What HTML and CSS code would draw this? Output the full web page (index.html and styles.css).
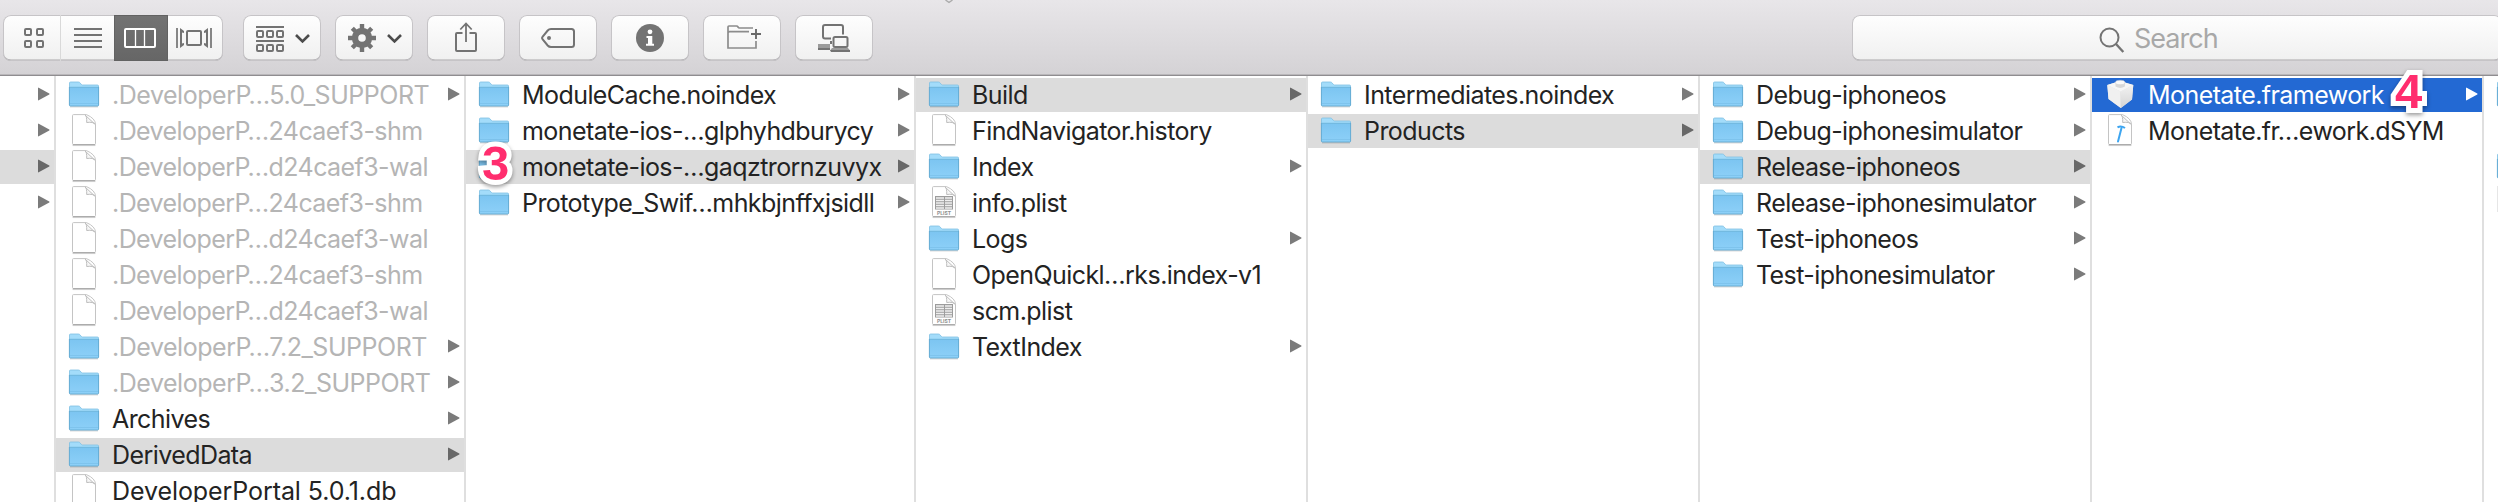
FILE: index.html
```
<!DOCTYPE html>
<html lang="en">
<head>
<meta charset="utf-8">
<title>DerivedData</title>
<link rel="stylesheet" href="styles.css">
</head>
<body>
<svg class="defs" aria-hidden="true">
  <defs>
    <linearGradient id="gFolder" x1="0" y1="0" x2="0" y2="1"><stop offset="0" stop-color="#7cc5f1"/><stop offset="1" stop-color="#8dd0f8"/></linearGradient>
    <linearGradient id="gCube" x1="0" y1="0" x2="0" y2="1"><stop offset="0" stop-color="#f2f2f2"/><stop offset="1" stop-color="#d4d4d4"/></linearGradient>
    <symbol id="folder" viewBox="0 0 32 34">
      <path d="M2 28.8h28" stroke="#000" stroke-opacity=".18" stroke-width="1.2"/>
      <path d="M1.500 27V5q0-1 1-1h8q.8 0 1.400.7l1.600 1.900q.4.400 1 .4H29.500q1 0 1 1v19z" fill="#a3dcfa" stroke="#7dbfe2" stroke-width=".8"/>
      <path d="M1.400 9.500H30.600V27q0 1-1 1H2.400q-1 0-1-1z" fill="url(#gFolder)"/>
      <path d="M1.400 9.300H30.600" stroke="#6cb4dd" stroke-width="1"/>
      <path d="M2 25.500H30" stroke="#79bfe8" stroke-width=".7"/>
      <path d="M1.400 9v18q0 1 1 1H29.600q1 0 1-1V9" fill="none" stroke="#62a9d0" stroke-width=".9"/>
    </symbol>
    <symbol id="doc" viewBox="0 0 32 34">
      <path d="M4.500 31.500h23" stroke="#000" stroke-opacity=".15" stroke-width="1.200"/>
      <path d="M5.500.6H18.500Q27.500 4.500 27.500 10.500V29.600q0 1-1 1H5.500q-1 0-1-1V1.600q0-1 1-1z" fill="#fff" stroke="#c4c4c4" stroke-width="1"/>
      <path d="M5 30.700h22" stroke="#a6a6a6" stroke-width="1"/>
      <path d="M17 1Q19 2 18.700 8.500Q25.500 7.500 27.300 10.500Z" fill="#f7f7f7" stroke="#bdbdbd" stroke-width="1" stroke-linejoin="round"/>
    </symbol>
    <symbol id="plist" viewBox="0 0 32 34">
      <use href="#doc"/>
      <rect x="7" y="10" width="18" height="13.500" fill="#9c9c9c"/>
      <path d="M8 12h8M8 14.500h8M8 17h8M8 19.500h8M8 22h8M17 12H24M17 14.500H24M17 17H24M17 19.500H24M17 22H24" stroke="#efefef" stroke-width="1.500"/>
      <text x="16" y="28.900" text-anchor="middle" class="plist-tag">PLIST</text>
    </symbol>
    <symbol id="dsym" viewBox="0 0 32 34">
      <use href="#doc"/>
      <path d="M17.500 14L14 27.500" stroke="#3da5f0" stroke-width="2" stroke-linecap="round"/>
      <path d="M13.500 13.300Q17 11.200 21 14" fill="none" stroke="#3da5f0" stroke-width="2"/>
    </symbol>
    <symbol id="cube" viewBox="0 0 32 34">
      <path d="M3.300 7L16 3l13.300 4L28 21.500 16.800 30 4.500 21z" fill="#dcdcdc"/>
      <path d="M3.300 7L16.500 13.500 16.800 30 4.500 21z" fill="#f0f0f0"/>
      <path d="M29.300 7L16.500 13.500 16.800 30 28 21.500z" fill="url(#gCube)"/>
      <path d="M3.300 7L16 3l13.300 4L16.500 13.500z" fill="#f6f6f6"/>
      <path d="M11.500 4.500v4q4.700 2.800 9.400 0v-4z" fill="#d8d8d8"/>
      <ellipse cx="16.200" cy="4.500" rx="4.700" ry="2.200" fill="#fafafa" stroke="#ccc" stroke-width=".5"/>
    </symbol>
    <symbol id="tri" viewBox="0 0 12 14"><path d="M.7.700L11.300 6.600q.4.400 0 .8L.7 13.300q-.7.300-.7-.4V1.100Q0 .4.700.700z" fill="currentColor"/></symbol>
    <symbol id="chev" viewBox="0 0 16 10"><path d="M1.500 1.500L8 8l6.500-6.500" fill="none" stroke="#4c4c4c" stroke-width="2.600"/></symbol>
  </defs>
</svg>

<header class="toolbar">
  <svg class="title-mark" width="8" height="4" viewBox="0 0 8 4"><path d="M.5 0L4 2.500 7.500 0" fill="none" stroke="#aaa" stroke-width="1.400"/></svg>
  <div class="segmented">
    <button class="seg seg-icon" aria-label="Icon view"><svg width="58" height="46" viewBox="3 15 58 46"><g class="line"><rect x="25" y="29" width="6" height="6" rx="1"/><rect x="37" y="29" width="6" height="6" rx="1"/><rect x="25" y="41" width="6" height="6" rx="1"/><rect x="37" y="41" width="6" height="6" rx="1"/></g></svg></button>
    <button class="seg seg-list" aria-label="List view"><svg width="53" height="46" viewBox="61 15 53 46"><path class="line" d="M74 29h28M74 35h28M74 41h28M74 47h28"/></svg></button>
    <button class="seg seg-cols" aria-label="Column view"><svg width="54" height="46" viewBox="114 15 54 46"><rect x="125" y="29" width="30" height="18" rx="1" fill="none" stroke="#fff" stroke-width="2"/><path d="M135.500 30v16M144.500 30v16" stroke="#fff" stroke-width="1.300"/></svg></button>
    <button class="seg seg-flow" aria-label="Cover flow view"><svg width="55" height="46" viewBox="168 15 55 46"><rect class="line" x="187" y="31" width="14" height="14" rx="1"/><path class="line thin" d="M177 28v20M211 28v20"/><path d="M180 28l4 3v2l-2-.5v11l2-.5v2l-4 3zM208 28l-4 3v2l2-.5v11l-2-.5v2l4 3z" fill="#737373"/></svg></button>
  </div>
  <button class="btn" aria-label="Arrange"><svg width="78" height="46" viewBox="243 15 78 46"><g class="line"><path d="M256 27h28M256 41h28"/><rect x="257" y="31" width="6" height="6" rx="1"/><rect x="267" y="31" width="6" height="6" rx="1"/><rect x="277" y="31" width="6" height="6" rx="1"/><rect x="257" y="45" width="6" height="6" rx="1"/><rect x="267" y="45" width="6" height="6" rx="1"/><rect x="277" y="45" width="6" height="6" rx="1"/></g><use href="#chev" x="294.500" y="33.500" width="16" height="10"/></svg></button>
  <button class="btn" aria-label="Action"><svg width="78" height="46" viewBox="335 15 78 46"><g fill="none" stroke="#737373"><circle cx="362" cy="38" r="7" stroke-width="6.400"/><g stroke-width="4.400"><path d="M362 24v6M362 46v6M348 38h6M370 38h6"/><path d="M352.300 28.300l4 4M367.700 43.700l4 4M371.700 28.300l-4 4M356.300 43.700l-4 4"/></g></g><use href="#chev" x="386.500" y="33.500" width="16" height="10"/></svg></button>
  <button class="btn" aria-label="Share"><svg width="78" height="46" viewBox="427 15 78 46"><g class="line"><path d="M462.500 33H457q-1 0-1 1v16q0 1 1 1h18q1 0 1-1V34q0-1-1-1h-5.500"/><path d="M466 42V23.500M460.300 29.500L466 23.500l5.700 6" stroke-width="1.800"/></g></svg></button>
  <button class="btn" aria-label="Tags"><svg width="78" height="46" viewBox="519 15 78 46"><path class="line" d="M551 29H571.500q2.500 0 2.500 2.500V44.500q0 2.500-2.500 2.500H551q-2 0-3.300-1.500L542.500 39.200q-1-1.200 0-2.400L547.700 30.500Q549 29 551 29z"/><circle cx="549" cy="38" r="2" fill="#737373"/></svg></button>
  <button class="btn" aria-label="Get info"><svg width="78" height="46" viewBox="611 15 78 46"><circle cx="650" cy="38" r="14" fill="#737373"/><circle cx="650" cy="31.800" r="2.400" fill="#fff"/><path d="M646.500 36H652.300V43.800H654V45.800H646V43.800H648V38H646.500z" fill="#fff"/></svg></button>
  <button class="btn" aria-label="New folder"><svg width="78" height="46" viewBox="703 15 78 46"><g fill="none" stroke="#8c8c8c" stroke-width="1.700"><path d="M756 41v7H728V27q0-1 1-1h7.500q1 0 1.500 1t1.500 1H753M728 33q0-1.300 1.500-1.300H749"/></g><path d="M756 29v10M751 34h10" stroke="#6a6a6a" stroke-width="1.900"/></svg></button>
  <button class="btn" aria-label="Connect"><svg width="78" height="46" viewBox="795 15 78 46"><g class="line"><path d="M831 38.500H825q-2 0-2-2V27q0-2 2-2H841q2 0 2 2v7.500"/><rect x="833.500" y="37" width="14" height="10" rx="1.500"/><path d="M831 41v3"/></g><rect x="818" y="44" width="12" height="4" fill="#9b9b9b"/><path d="M818 48h12v2h-12z" fill="#737373"/><path d="M832 48h16l2 2.500h-20z" fill="#9b9b9b"/><path d="M830 50h20v2h-19z" fill="#737373"/></svg></button>
  <div class="search">
    <svg width="26" height="28" viewBox="0 0 26 28"><circle cx="10.500" cy="10.500" r="9" fill="none" stroke="#747474" stroke-width="2"/><path d="M17 17l7.300 8" stroke="#747474" stroke-width="2.400"/></svg>
    <span>Search</span>
  </div>
</header>

<main class="columns">
  <ul class="col c0">
    <li class="row"><svg class="arrow"><use href="#tri"/></svg></li>
    <li class="row"><svg class="arrow"><use href="#tri"/></svg></li>
    <li class="row on"><svg class="arrow"><use href="#tri"/></svg></li>
    <li class="row"><svg class="arrow"><use href="#tri"/></svg></li>
  </ul>
  <ul class="col c1">
    <li class="row dim support"><svg class="ico"><use href="#folder"/></svg><span>.DeveloperP…5.0_SUPPORT</span><svg class="arrow"><use href="#tri"/></svg></li>
    <li class="row dim"><svg class="ico"><use href="#doc"/></svg><span>.DeveloperP…24caef3-shm</span></li>
    <li class="row dim"><svg class="ico"><use href="#doc"/></svg><span>.DeveloperP…d24caef3-wal</span></li>
    <li class="row dim"><svg class="ico"><use href="#doc"/></svg><span>.DeveloperP…24caef3-shm</span></li>
    <li class="row dim"><svg class="ico"><use href="#doc"/></svg><span>.DeveloperP…d24caef3-wal</span></li>
    <li class="row dim"><svg class="ico"><use href="#doc"/></svg><span>.DeveloperP…24caef3-shm</span></li>
    <li class="row dim"><svg class="ico"><use href="#doc"/></svg><span>.DeveloperP…d24caef3-wal</span></li>
    <li class="row dim support"><svg class="ico"><use href="#folder"/></svg><span>.DeveloperP…7.2_SUPPORT</span><svg class="arrow"><use href="#tri"/></svg></li>
    <li class="row dim support"><svg class="ico"><use href="#folder"/></svg><span>.DeveloperP…3.2_SUPPORT</span><svg class="arrow"><use href="#tri"/></svg></li>
    <li class="row"><svg class="ico"><use href="#folder"/></svg><span>Archives</span><svg class="arrow"><use href="#tri"/></svg></li>
    <li class="row on"><svg class="ico"><use href="#folder"/></svg><span>DerivedData</span><svg class="arrow"><use href="#tri"/></svg></li>
    <li class="row portal"><svg class="ico"><use href="#doc"/></svg><span>DeveloperPortal 5.0.1.db</span></li>
  </ul>
  <ul class="col c2">
    <li class="row"><svg class="ico"><use href="#folder"/></svg><span>ModuleCache.noindex</span><svg class="arrow"><use href="#tri"/></svg></li>
    <li class="row"><svg class="ico"><use href="#folder"/></svg><span>monetate-ios-…glphyhdburycy</span><svg class="arrow"><use href="#tri"/></svg></li>
    <li class="row on"><svg class="ico"><use href="#folder"/></svg><span>monetate-ios-…gaqztrornzuvyx</span><svg class="arrow"><use href="#tri"/></svg><b class="badge three">3</b></li>
    <li class="row"><svg class="ico"><use href="#folder"/></svg><span>Prototype_Swif…mhkbjnffxjsidll</span><svg class="arrow"><use href="#tri"/></svg></li>
  </ul>
  <ul class="col c3">
    <li class="row on"><svg class="ico"><use href="#folder"/></svg><span>Build</span><svg class="arrow"><use href="#tri"/></svg></li>
    <li class="row"><svg class="ico"><use href="#doc"/></svg><span>FindNavigator.history</span></li>
    <li class="row"><svg class="ico"><use href="#folder"/></svg><span>Index</span><svg class="arrow"><use href="#tri"/></svg></li>
    <li class="row"><svg class="ico"><use href="#plist"/></svg><span>info.plist</span></li>
    <li class="row"><svg class="ico"><use href="#folder"/></svg><span>Logs</span><svg class="arrow"><use href="#tri"/></svg></li>
    <li class="row"><svg class="ico"><use href="#doc"/></svg><span>OpenQuickl…rks.index-v1</span></li>
    <li class="row"><svg class="ico"><use href="#plist"/></svg><span>scm.plist</span></li>
    <li class="row"><svg class="ico"><use href="#folder"/></svg><span>TextIndex</span><svg class="arrow"><use href="#tri"/></svg></li>
  </ul>
  <ul class="col c4">
    <li class="row"><svg class="ico"><use href="#folder"/></svg><span>Intermediates.noindex</span><svg class="arrow"><use href="#tri"/></svg></li>
    <li class="row on"><svg class="ico"><use href="#folder"/></svg><span>Products</span><svg class="arrow"><use href="#tri"/></svg></li>
  </ul>
  <ul class="col c5">
    <li class="row"><svg class="ico"><use href="#folder"/></svg><span>Debug-iphoneos</span><svg class="arrow"><use href="#tri"/></svg></li>
    <li class="row"><svg class="ico"><use href="#folder"/></svg><span>Debug-iphonesimulator</span><svg class="arrow"><use href="#tri"/></svg></li>
    <li class="row on"><svg class="ico"><use href="#folder"/></svg><span>Release-iphoneos</span><svg class="arrow"><use href="#tri"/></svg></li>
    <li class="row"><svg class="ico"><use href="#folder"/></svg><span>Release-iphonesimulator</span><svg class="arrow"><use href="#tri"/></svg></li>
    <li class="row"><svg class="ico"><use href="#folder"/></svg><span>Test-iphoneos</span><svg class="arrow"><use href="#tri"/></svg></li>
    <li class="row"><svg class="ico"><use href="#folder"/></svg><span>Test-iphonesimulator</span><svg class="arrow"><use href="#tri"/></svg></li>
  </ul>
  <ul class="col c6">
    <li class="row picked"><svg class="ico"><use href="#cube"/></svg><span>Monetate.framework</span><svg class="arrow"><use href="#tri"/></svg><b class="badge four">4</b></li>
    <li class="row"><svg class="ico"><use href="#dsym"/></svg><span>Monetate.fr…ework.dSYM</span></li>
  </ul>
  <ul class="col c7">
    <li class="row"><svg class="ico"><use href="#folder"/></svg></li>
    <li class="row"></li>
    <li class="row"><svg class="ico"><use href="#folder"/></svg></li>
    <li class="row"><i class="stub"></i></li>
  </ul>
</main>
</body>
</html>
```
FILE: styles.css
```
* { box-sizing: border-box; }
html, body { margin: 0; width: 2498px; height: 502px; overflow: hidden; }
body {
  display: flex;
  flex-direction: column;
  background: #fff;
  color: #232323;
  font-family: Inter, "Liberation Sans", sans-serif;
}
svg { display: block; flex: none; }
.defs { position: absolute; width: 0; height: 0; }

.toolbar {
  position: relative;
  flex: none;
  display: flex;
  align-items: flex-start;
  height: 76px;
  padding: 15px 0 0 3px;
  background: linear-gradient(#e8e6e9, #d4d2d5);
  border-bottom: 1px solid #8f8d90;
  box-shadow: inset 0 -1px 0 #b9b7ba;
}
.title-mark { position: absolute; left: 945px; top: 0; }
button { appearance: none; border: 0; padding: 0; margin: 0; background: none; }
.segmented, .btn, .search {
  flex: none;
  height: 46px;
  border-radius: 8px;
  background: linear-gradient(#fefefe, #f0f0f0);
  box-shadow: inset 0 0 0 1px #c6c4c7, inset 0 -1.500px 0 #a9a7aa;
}
.segmented { display: flex; width: 220px; margin-right: 20px; }
.seg-icon { box-shadow: inset -1px 0 0 #d9d9d9; }
.seg-cols { background: linear-gradient(#737373, #666); box-shadow: inset 0 0 0 1px #626262; }
.btn { width: 78px; margin-right: 14px; }
.line { fill: none; stroke: #737373; stroke-width: 2; }
.thin { stroke-width: 1.700; }
.search {
  display: flex;
  align-items: flex-start;
  width: 650px;
  margin-left: 965px;
  padding: 12px 0 0 247px;
  color: #a8a8a8;
  font-size: 27px;
}
.search span { margin-left: 9px; line-height: 23px; letter-spacing: -1px; }

.columns { flex: 1; display: flex; min-height: 0; }
.col {
  flex: none;
  margin: 0;
  padding: 2px 0 0;
  list-style: none;
  border-right: 2px solid #dfdfdf;
}
.c0 { width: 56px; }
.c1 { width: 410px; }
.c2 { width: 450px; }
.c3, .c4, .c5, .c6 { width: 392px; }
.c7 { width: 60px; border: 0; }
.row {
  position: relative;
  display: flex;
  align-items: flex-start;
  height: 34px;
  margin-bottom: 2px;
  padding: 0 4px 0 12px;
  font-size: 25px;
  line-height: 34px;
  letter-spacing: -.57px;
  white-space: nowrap;
}
.row.support { letter-spacing: -.47px; }
.row.portal { letter-spacing: -.08px; }
.row.dim { color: #b5b5b5; }
.row.on { background: #dcdcdc; }
.row.picked { background: #2369d3; color: #fff; }
.ico { width: 32px; height: 34px; margin-right: 12px; }
.arrow { width: 12px; height: 14px; margin: 9px 0 0 auto; color: #7b7b7b; }
.on .arrow { color: #686868; }
.picked .arrow { color: #fff; }
.stub { width: 24px; height: 26px; margin-left: 1px; background: #e6e6e6; }
.plist-tag { font: 700 5px Inter, sans-serif; letter-spacing: 0; fill: #8e8e8e; }
.badge {
  position: absolute;
  font: 700 49px/34px "Liberation Sans", sans-serif;
  letter-spacing: 0;
  color: #ff2d6e;
  -webkit-text-stroke: 10px #fff;
  stroke-linejoin: round;
  paint-order: stroke fill;
  filter: drop-shadow(0 2px 2px rgba(0, 0, 0, .4));
}
.three { left: 16px; top: -4px; }
.four { left: 303px; top: -4px; }
```
